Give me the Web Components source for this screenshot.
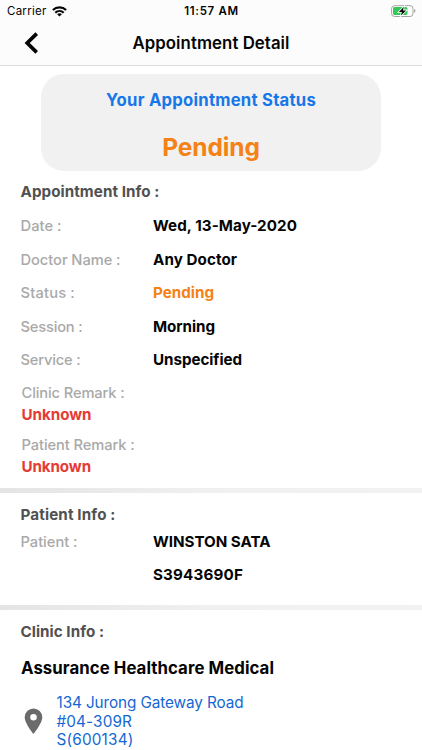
<!DOCTYPE html>
<html lang="en">
<head>
<meta charset="utf-8">
<title>Appointment Detail</title>
<style>
body{margin:0;background:#fff;font-family:Inter,"Liberation Sans",sans-serif;color:#050505;overflow:hidden}
</style>
</head>
<body>
<appointment-page></appointment-page>
<script>
const define = (name, html, ready) => customElements.define(name, class extends HTMLElement {
  constructor() {
    super();
    this.attachShadow({mode: 'open'}).innerHTML = html;
  }
  connectedCallback() { if (ready) ready(this); }
});

// A single line of text, tracked so that it spans the width in "w".
define('fit-text', `<style>
:host{display:block;white-space:pre;line-height:18px}
span{display:inline-block}
</style><span><slot></slot></span>`, el => {
  const span = el.shadowRoot.querySelector('span');
  const slot = el.shadowRoot.querySelector('slot');
  const fit = () => {
    span.style.letterSpacing = '0px';
    const n = slot.assignedNodes({flatten: true}).map(t => t.textContent).join('').length;
    if (!n) return;
    const width = span.getBoundingClientRect().width;
    const gap = (Number(el.getAttribute('w')) - width) / n;
    span.style.letterSpacing = gap.toFixed(4) + 'px';
  };
  fit();
  slot.addEventListener('slotchange', fit);
});

define('status-bar', `<style>
:host{display:grid;grid-template-columns:1fr auto 1fr;align-items:center;height:22px;padding:0 6px 0 7px;font-size:11.5px;box-sizing:border-box}
.l{display:flex;align-items:center;gap:5px}
.c{font-weight:600}
.r{justify-self:end;display:block}
svg{display:block}
</style>
<div class="l"><fit-text w="39.5">Carrier</fit-text>
<svg width="15" height="11" viewBox="0 0 15 11" fill="none" stroke="#050505" stroke-width="2.2"><path d="M.9 4C4.600.4 10.400.4 14.100 4"/><path d="M3.300 6.700c2.400-2.300 6-2.300 8.400 0"/><path d="M7.500 10.600 5.100 8.300c1.400-1.300 3.400-1.300 4.800 0z" fill="#050505" stroke="none"/></svg></div>
<fit-text class="c" w="54.500">11:57 AM</fit-text>
<svg class="r" width="25" height="13" viewBox="0 0 25 13"><rect x=".6" y=".7" width="21.400" height="10.800" rx="3" fill="#fff" stroke="#a3a3a3"/><rect x="2" y="2.100" width="14.500" height="8" rx="1.500" fill="#35c759"/><path d="M23.300 4.100c1.500.6 1.500 3.200 0 3.800z" fill="#8d8d8d"/><path d="M12.900 1.700 7.900 6.900h3l-1 3.700 5.300-5.200H12z" fill="#050505" stroke="#fff" stroke-width="1.600" paint-order="stroke"/></svg>`);

define('nav-bar', `<style>
:host{display:grid;grid-template-columns:1fr auto 1fr;align-items:center;height:44px;box-sizing:border-box;border-bottom:1px solid #dcdcdc;padding-bottom:2px;font-size:16.800px;font-weight:600}
svg{display:block;margin-left:24px}
</style><svg width="16" height="22" viewBox="0 0 16 22" fill="none" stroke="#050505" stroke-width="3.700"><path d="M12.700 1.600 3.200 11l9.500 9.400"/></svg>
<fit-text w="157"><slot></slot></fit-text><i></i>`);

define('status-card', `<style>
:host{display:flex;flex-direction:column;align-items:center;box-sizing:border-box;width:340px;height:97px;margin:7.500px auto 0 41px;border-radius:23px;background:#f1f1f1;padding-top:17.500px;gap:26px}
.t{font-size:16.700px;font-weight:650;color:#1877e8}
.s{font-size:24.500px;font-weight:650;color:#f58216;line-height:24px}
</style><fit-text class="t" w="210">Your Appointment Status</fit-text><fit-text class="s" w="97.500">Pending</fit-text>`);

define('section-title', `<style>
:host{display:flex;align-items:center;padding-left:20.500px;font-size:15.200px;font-weight:650;color:#515151}
</style><slot></slot>`);

define('info-row', `<style>
:host{display:grid;grid-template-columns:132.500px 1fr;align-items:center;height:33.600px;padding-left:20.500px;font-size:15.200px}
.k{color:#a9a9a9;font-weight:550;font-size:14.700px}
.v{font-weight:650}
</style><div class="k"><slot name="label"></slot></div><div class="v"><slot></slot></div>`);

define('remark-block', `<style>
:host{display:flex;flex-direction:column;gap:4px;padding-left:21.500px}
.k{color:#a9a9a9;font-weight:550;font-size:14.700px}
.v{color:#e63b34;font-weight:650;font-size:15.200px}
</style><div class="k"><slot name="label"></slot></div><div class="v"><slot></slot></div>`);

define('section-rule', `<style>
:host{display:block;height:5px;background:linear-gradient(90deg,#e4e4e4,#f0f0f0 50%,#f2f2f2)}
</style>`);

define('clinic-address', `<style>
:host{display:flex;align-items:center;padding-left:24px;gap:13.500px;color:#1567d3;font-size:15.300px}
svg{display:block}
</style><svg width="19" height="27" viewBox="0 0 19 27"><path fill="#6b6b6b" fill-rule="evenodd" d="M9.500.5A8.800 8.800 0 0 0 .7 9.300C.7 15.500 9.500 26 9.500 26s8.800-10.500 8.800-16.700A8.800 8.800 0 0 0 9.500.5zm0 5.500a3.300 3.300 0 1 1 0 6.600 3.300 3.300 0 0 1 0-6.600z"/></svg><div><slot></slot></div>`);

define('appointment-page', `<style>
:host{display:block;width:422px;height:750px;overflow:hidden;background:#fff}
header{background:#fcfcfc}
.a{margin-top:12px;height:18px}
.rows{margin-top:8.700px}
.r1{margin-top:7.300px}.r2{margin-top:12px;margin-bottom:11.500px}
.p{margin-top:13.200px}.prow{margin-top:.8px}
.second{margin-bottom:13.300px}
.c{margin-top:12.500px}
.name{margin:18px 0 0 21px;font-size:16.800px;font-weight:650}
.addr{margin-top:17.500px}
.orange{color:#f58216}
clinic-address fit-text{line-height:18.200px}
</style>
<header><status-bar></status-bar><nav-bar>Appointment Detail</nav-bar></header>
<main>
<status-card></status-card>
<section-title class="a"><fit-text w="139">Appointment Info :</fit-text></section-title>
<div class="rows">
<info-row><fit-text slot="label" w="41">Date :</fit-text><fit-text w="144">Wed, 13-May-2020</fit-text></info-row>
<info-row><fit-text slot="label" w="100">Doctor Name :</fit-text><fit-text w="84">Any Doctor</fit-text></info-row>
<info-row><fit-text slot="label" w="54.500">Status :</fit-text><fit-text class="orange" w="61">Pending</fit-text></info-row>
<info-row><fit-text slot="label" w="62">Session :</fit-text><fit-text w="62">Morning</fit-text></info-row>
<info-row><fit-text slot="label" w="60">Service :</fit-text><fit-text w="89">Unspecified</fit-text></info-row>
</div>
<remark-block class="r1"><fit-text slot="label" w="103">Clinic Remark :</fit-text><fit-text w="70">Unknown</fit-text></remark-block>
<remark-block class="r2"><fit-text slot="label" w="113">Patient Remark :</fit-text><fit-text w="69.500">Unknown</fit-text></remark-block>
<section-rule></section-rule>
<section-title class="p"><fit-text w="95">Patient Info :</fit-text></section-title>
<info-row class="prow"><fit-text slot="label" w="57">Patient :</fit-text><fit-text w="117.500">WINSTON SATA</fit-text></info-row>
<info-row class="second"><fit-text w="90">S3943690F</fit-text></info-row>
<section-rule></section-rule>
<section-title class="c"><fit-text w="83.500">Clinic Info :</fit-text></section-title>
<fit-text class="name" w="253">Assurance Healthcare Medical</fit-text>
<clinic-address class="addr"><fit-text w="187">134 Jurong Gateway Road</fit-text><fit-text w="75.500">#04-309R</fit-text><fit-text w="77">S(600134)</fit-text></clinic-address>
</main>`);
</script>
</body>
</html>
